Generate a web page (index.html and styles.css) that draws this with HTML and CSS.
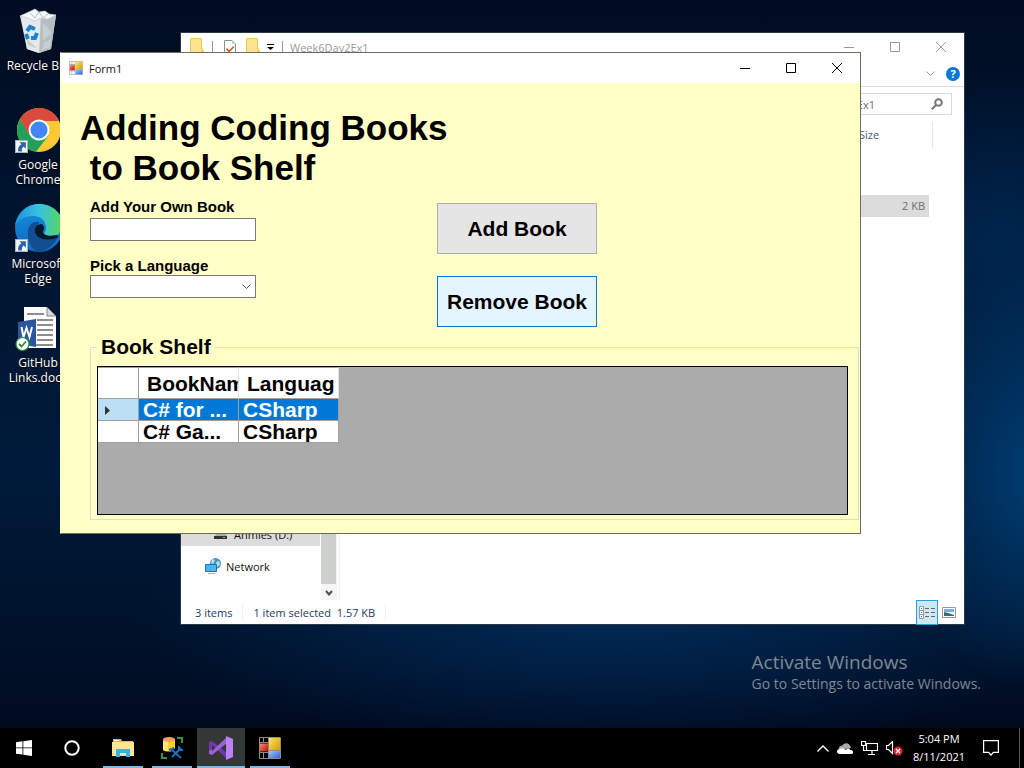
FILE: index.html
```html
<!DOCTYPE html>
<html lang="en">
<head>
<meta charset="utf-8">
<meta name="viewport" content="width=device-width, initial-scale=1">
<title>Form1</title>
<link rel="stylesheet" href="styles.css">
</head>
<body>
<svg class="defs" width="0" height="0" aria-hidden="true">
  <defs>
    <symbol id="shortcut" viewBox="0 0 12 12">
      <path fill="#f4f6f8" stroke="#aab4be" d="M.5.5h11v11H.5z"/>
      <path fill="#2d62a8" d="M4 2h6v6L8 6C6.500 7 6 8.500 6.500 10.500H3C2.500 7.500 3.500 5.500 6 4z"/>
    </symbol>
    <symbol id="formicon" viewBox="0 0 22 22">
      <path fill="none" stroke="#8b8b8b" stroke-width="1" d="M.5.5h21v21H.5zM.5 5.500h9M9.500.5v21M4.500.5v5M4.500 15v6M.5 15.500h9M9.500 13.500h12"/>
      <path fill="url(#gRed)" d="M1 6.500h8v8H1z"/>
      <path fill="url(#gGold)" d="M10 1h11v12H10z"/>
      <path fill="url(#gBlue)" d="M10 14h11v7H10z"/>
    </symbol>
    <symbol id="folder" viewBox="0 0 14 18">
      <path fill="#ffe48f" stroke="#f0ca55" d="M.5.5h11v12h2v5H.5z"/>
      <path fill="#ffd45e" d="M11 10h2v7h-2z"/>
    </symbol>
    <linearGradient id="gRed" x2="1" y2="1"><stop offset="0" stop-color="#ff8a70"/><stop offset="1" stop-color="#b80f0f"/></linearGradient>
    <linearGradient id="gGold" x2="1" y2="1"><stop offset="0" stop-color="#ffe36e"/><stop offset="1" stop-color="#d79a00"/></linearGradient>
    <linearGradient id="gBlue" x2="1" y2="1"><stop offset="0" stop-color="#9ec5ff"/><stop offset="1" stop-color="#2d63d6"/></linearGradient>
  </defs>
</svg>

<main class="desktop">
  <nav class="shortcuts" aria-label="Desktop">
    <a class="shortcut" href="#">
      <svg class="shortcut-icon" viewBox="0 0 48 48" aria-hidden="true">
        <path fill="#d4dadd" d="M6 10l36-1-5 34-12 4-12-4z"/>
        <path fill="#b6bec3" d="M27 13l15-4-5 34-12 4z"/>
        <path fill="#e5e9eb" d="M7 10l19 4-1 33-12-4z"/>
        <path fill="#c8cfd3" d="M29 17l9 10-9 7zM30 37l7-4-1 8-8 3zM12 32l12 11-10-4z"/>
        <path fill="#f7f9fa" stroke="#c3cbd0" stroke-width=".7" d="M6 10l11-5 4-2 4 3 6-1 4 3 7 1-8 4-8-1-5 3-7-3z"/>
        <path fill="none" stroke="#b4bcc1" d="M16 7l5 5 4-6 4 6 5-4"/>
        <path fill="none" stroke="#1683d4" stroke-width="4" d="M13 25l3-4 5 2M23 27l-2 5-4 0M14 33l-2-5"/>
      </svg>
      <span>Recycle Bin</span>
    </a>
    <a class="shortcut" href="#">
      <svg class="shortcut-icon" viewBox="0 0 48 48" aria-hidden="true">
        <circle cx="25" cy="25" r="22" fill="#fbc934"/>
        <path fill="#21a05c" d="M5.950 14A22 22 0 0 0 22 46.800L34.500 30.500 16 30z"/>
        <path fill="#dc4a3e" d="M5.950 14A22 22 0 0 1 45 16H25L15.500 30.500z"/>
        <circle cx="25" cy="25" r="10.500" fill="#fff"/><circle cx="25" cy="25" r="8.500" fill="#4286f5"/>
        <use href="#shortcut" x="1" y="35" width="13" height="13"/>
      </svg>
      <span>Google Chrome</span>
    </a>
    <a class="shortcut" href="#">
      <svg class="shortcut-icon" viewBox="0 0 48 48" aria-hidden="true">
        <defs>
          <linearGradient id="e1" x2="1"><stop offset="0" stop-color="#1e90dc"/><stop offset=".5" stop-color="#35c3e2"/><stop offset="1" stop-color="#5ad654"/></linearGradient>
          <linearGradient id="e2" x2="0" y2="1"><stop offset="0" stop-color="#1491df"/><stop offset="1" stop-color="#1167c0"/></linearGradient>
        </defs>
        <circle cx="25" cy="24" r="24" fill="url(#e2)"/>
        <path fill="#124d8f" d="M14 27C15 20 20 17 25 18c-2 8 1 17 19 15-4 8-12 15-21 15-6-4-10-12-9-21z"/>
        <path fill="url(#e1)" d="M1 22C3 9 13 0 25 0c14 0 24 10 24 21 0 8-6 11-12 11-5 0-8-2-6-4 3-5 0-16-12-16C10 12 4 16 1 22z"/>
        <path fill="#04172f" d="M28 20c-5 0-8 4-7 8 2 7 12 10 24 5l-2-2c-8 2-15 0-14-4 2-2 1-5-1-7z"/>
        <use href="#shortcut" x="1" y="35" width="13" height="13"/>
      </svg>
      <span>Microsoft Edge</span>
    </a>
    <a class="shortcut" href="#">
      <svg class="shortcut-icon" viewBox="0 0 48 48" aria-hidden="true">
        <path fill="#fff" d="M10 4h23l9 9v32H10z"/>
        <path fill="#dadada" stroke="#555" stroke-width=".7" d="M33 4v9h9z"/>
        <path stroke="#8e8e8e" stroke-width="2" d="M13 11h17M23 17h16M23 22h16M23 27h16M23 32h16M23 37h16M17 42h22"/>
        <path fill="#2a569b" d="M4 19l18-3v28L4 41z"/>
        <path fill="none" stroke="#fff" stroke-width="2" d="M7.500 24l2 10 3-9 3 9 2.500-10"/>
        <circle cx="8.500" cy="41" r="6.500" fill="#fff" stroke="#298d3d" stroke-width="1.200"/>
        <path fill="none" stroke="#298d3d" stroke-width="1.800" d="M5 41l2.500 2.500 4.500-5"/>
      </svg>
      <span>GitHub Links.docx</span>
    </a>
  </nav>

  <section class="explorer" aria-label="Week6Day2Ex1">
    <header class="explorer-title">
      <svg class="folder-icon" aria-hidden="true"><use href="#folder"/></svg>
      <i class="tick"></i>
      <svg class="page-icon" viewBox="0 0 12 15" aria-hidden="true"><path fill="#fff" stroke="#8b9298" d="M.5.500H8L11.500 4v10.500H.5z"/><path fill="#c5cfd6" d="M8 0v4h4z"/><path fill="none" stroke="#e8541c" stroke-width="1.600" d="M2.500 8.500l2.500 3 5-5"/></svg>
      <svg class="folder-icon" aria-hidden="true"><use href="#folder"/></svg>
      <svg class="drop-icon" viewBox="0 0 7 6" aria-hidden="true"><path d="M0 0h7v1H0zM0 3h7L3.500 6z"/></svg>
      <i class="tick"></i>
      <span class="explorer-name">Week6Day2Ex1</span>
      <div class="controls muted">
        <button type="button" aria-label="Minimize folder"><svg viewBox="0 0 10 10"><path d="M0 5.500h10"/></svg></button>
        <button type="button" aria-label="Maximize folder"><svg viewBox="0 0 10 10"><path d="M.5.500h9v9h-9z"/></svg></button>
        <button type="button" aria-label="Close folder"><svg viewBox="0 0 10 10"><path d="M0 0l10 10M10 0L0 10"/></svg></button>
      </div>
    </header>
    <div class="ribbon">
      <svg class="chevron" viewBox="0 0 9 5" aria-hidden="true"><path d="M.5.500l4 4 4-4"/></svg>
      <button class="help" type="button" aria-label="Help">?</button>
    </div>
    <div class="address">
      <label class="search"><input type="text" aria-label="Search" placeholder="Search Week6Day2Ex1"><svg viewBox="0 0 12 12" aria-hidden="true"><circle cx="7.500" cy="4.500" r="3.300"/><path d="M5 7L.8 11.200"/></svg></label>
    </div>
    <div class="explorer-main">
      <div class="tree">
        <a class="tree-item current" href="#"><svg viewBox="0 0 16 16" aria-hidden="true"><path fill="#aaa" d="M4 6h8l2 4H2z"/><path fill="#333" d="M1 10h13v3H1z"/><path fill="#3bea3b" d="M10 11h2v1h-2z"/></svg>Anmies (D:)</a>
        <a class="tree-item network" href="#"><svg viewBox="0 0 16 16" aria-hidden="true"><circle cx="10.500" cy="5.500" r="5.500" fill="#4d93bd"/><path fill="#b9dcec" d="M7 1l3 1-2 4-2-1zM11 4l3-1 1 4-3 2z"/><path fill="#48b6f2" stroke="#1d77ae" d="M.5 6.500h11v7H.5z"/><path fill="#a9b7c0" d="M3 15h7v1H3z"/></svg>Network</a>
      </div>
      <div class="scroll"><span class="thumb"></span><svg class="scroll-arrow" viewBox="0 0 8 6" aria-hidden="true"><path d="M1 1l3 3.500L7 1"/></svg></div>
      <div class="files">
        <div class="file-head"><span>Size</span></div>
        <div class="file-row">2 KB</div>
      </div>
    </div>
    <footer class="status">
      <span>3 items</span><span>1 item selected&nbsp; 1.57 KB</span>
      <div class="views">
        <button class="view on" type="button" aria-label="Details"><svg viewBox="0 0 16 13"><path fill="#fff" stroke="#999" d="M.5.500h4v12h-4zM.5 4.500h4M.5 8.500h4"/><path stroke="#666" d="M6 2.500h4M12 2.500h4M6 6.500h4M12 6.500h4M6 10.500h4M12 10.500h4"/><path fill="#357ad0" d="M2 2h1v1H2zM2 6h1v1H2z"/><path fill="#d33" d="M2 10h1v1H2z"/></svg></button>
        <button class="view" type="button" aria-label="Thumbnails"><svg viewBox="0 0 14 11"><path fill="#fff" stroke="#999" d="M.5.500h13v10H.5z"/><path fill="#79adf2" d="M2 2h10v3H2z"/><path fill="#eef5f8" d="M2 5h10v2H2z"/><path fill="#396e72" d="M2 5l4 1 6 2v1H2z"/></svg></button>
      </div>
    </footer>
  </section>

  <section class="form-window" aria-label="Form1">
    <header class="form-title">
      <svg class="app-icon" aria-hidden="true"><use href="#formicon"/></svg>
      <span>Form1</span>
      <div class="controls">
        <button type="button" aria-label="Minimize"><svg viewBox="0 0 10 10"><path d="M0 5.500h10"/></svg></button>
        <button type="button" aria-label="Maximize"><svg viewBox="0 0 10 10"><path d="M.5.500h9v9h-9z"/></svg></button>
        <button type="button" aria-label="Close"><svg viewBox="0 0 10 10"><path d="M0 0l10 10M10 0L0 10"/></svg></button>
      </div>
    </header>
    <form class="form-body">
      <h1>Adding Coding Books
 to Book Shelf</h1>
      <div class="entry">
        <div class="fields">
          <label class="first" for="own">Add Your Own Book</label>
          <input id="own" class="box" type="text">
          <label class="second" for="lang">Pick a Language</label>
          <div class="pick">
            <select id="lang" class="box"><option></option><option>CSharp</option></select>
            <svg class="chevron" viewBox="0 0 9 5" aria-hidden="true"><path d="M.5.500l4 4 4-4"/></svg>
          </div>
        </div>
        <div class="actions">
          <button class="action" type="button">Add Book</button>
          <button class="action hot" type="button">Remove Book</button>
        </div>
      </div>
      <fieldset>
        <legend>Book Shelf</legend>
        <div class="grid">
          <table>
            <colgroup><col class="col-mark"><col class="col-text"><col class="col-text"></colgroup>
            <thead><tr><th></th><th>BookNam</th><th>Languag</th></tr></thead>
            <tbody>
              <tr class="selected"><td class="mark"><svg viewBox="0 0 5 9" aria-hidden="true"><path d="M0 0l5 4.500L0 9z"/></svg></td><td>C# for ...</td><td>CSharp</td></tr>
              <tr><td></td><td>C# Ga...</td><td>CSharp</td></tr>
            </tbody>
          </table>
        </div>
      </fieldset>
    </form>
  </section>

  <div class="activate"><p class="activate-head">Activate Windows</p><p>Go to Settings to activate Windows.</p></div>
</main>

<footer class="taskbar">
  <button class="task" type="button" aria-label="Start"><svg width="16" height="16" viewBox="0 0 16 16"><path fill="#fff" d="M0 2.200L6.500 1.300v6.200H0zM7.300 1.200L16 0v7.500H7.300zM0 8.300h6.500v6.300L0 13.700zM7.300 8.300H16V16l-8.700-1.200z"/></svg></button>
  <button class="task" type="button" aria-label="Cortana"><svg width="16" height="16" viewBox="0 0 16 16"><circle cx="8" cy="8" r="6.700" fill="none" stroke="#fff" stroke-width="2"/></svg></button>
  <div class="running">
    <button class="task open" type="button" aria-label="File Explorer"><svg width="22" height="18" viewBox="0 0 22 18"><path fill="#f1b72c" d="M1 0h8l1 2h11v5H1z"/><path fill="#ffe592" d="M0 3h22v14H0z"/><path fill="#fff" d="M2 1h5v1H2z"/><path fill="#33b4ea" d="M4 10h14v8h-4v-4H8v4H4z"/></svg></button>
    <button class="task open" type="button" aria-label="Database tools"><svg width="22" height="22" viewBox="0 0 22 22"><path fill="#ffd21f" d="M2 2v11c1 2 11 2 12 0V2z"/><path fill="#ffe873" d="M2 3h5v11l-5-1z"/><ellipse cx="8" cy="2.500" rx="6" ry="2.500" fill="#f4a45a"/><path fill="none" stroke="#38913c" stroke-width="2" d="M16 1h5v5M1 16v5h5"/><path fill="none" stroke="#000" stroke-width="4" d="M11 20l9-9M11 12l9 9"/><path fill="none" stroke="#1474c4" stroke-width="2" d="M11 20l9-9M10 12l10 9M8 13l5-2M18 9v4h4"/></svg></button>
    <button class="task open active" type="button" aria-label="Visual Studio"><svg width="24" height="24" viewBox="0 0 24 24"><path fill="#7038ad" d="M0 6l3-1 15 12v6L3 9v7l-3-1z"/><path fill="#9b61d8" d="M0 18l3 1L18 7V1L3 15v-2l-3 2z"/><path fill="#b983f2" d="M17 0l7 3v18l-7 3z"/></svg></button>
    <button class="task open" type="button" aria-label="Form1"><svg width="22" height="22"><use href="#formicon"/></svg></button>
  </div>
  <div class="tray">
    <svg width="12" height="7" viewBox="0 0 12 7"><path fill="none" stroke="#fff" stroke-width="1.300" d="M.5 6.500L6 1l5.500 5.500"/></svg>
    <svg width="16" height="11" viewBox="0 0 16 11"><path fill="#aaa" d="M2 7C1 4 4 2 5 3c2-4 8-4 9 2z"/><path fill="#fff" d="M3 11C-1 11-1 6 3 6c2-2 5 0 6 1 1-2 4-2 4 0 4 0 4 4 1 4z"/></svg>
    <svg width="17" height="15" viewBox="0 0 17 15"><path fill="none" stroke="#fff" stroke-width="1.200" d="M5.500 2.500h11v7h-11zM11 9.500v4M7 13.500h7M.5.500h4v4h-4zM2.500 4.500v5h3"/></svg>
    <svg width="17" height="15" viewBox="0 0 17 15"><path fill="none" stroke="#fff" stroke-width="1.200" d="M.5 4.500h2l4-4v12l-4-4h-2z"/><circle cx="12" cy="10" r="4.500" fill="#e8222e"/><path stroke="#fff" stroke-width="1.300" d="M10 8l4 4M14 8l-4 4"/></svg>
    <time class="clock" datetime="2021-08-11T17:04">5:04 PM<br>8/11/2021</time>
    <svg width="16" height="16" viewBox="0 0 16 16"><path fill="none" stroke="#fff" stroke-width="1.200" d="M.6.600h14.800v11.800h-5L8 15l-2.400-2.600h-5z"/></svg>
  </div>
</footer>
</body>
</html>
```
FILE: styles.css
```css
* { box-sizing: border-box; }
body {
  margin: 0;
  min-height: 100vh;
  display: flex;
  flex-direction: column;
  font: 12px/15px "Open Sans", "Noto Sans", sans-serif;
  color: #111;
  background: #000b20;
}
button, input, select { font: inherit; color: inherit; margin: 0; border-radius: 0; }
button { padding: 0; border: 0; background: none; }
a { color: inherit; text-decoration: none; }
p, h1 { margin: 0; }
svg { display: block; flex: none; }
.defs { position: absolute; }

.desktop {
  flex: 1;
  position: relative;
  overflow: hidden;
  min-height: 640px;
  background:
    radial-gradient(ellipse 160px 220px at 102% 65%, #003f75 0%, transparent 100%),
    radial-gradient(ellipse 480px 130px at 60% 85%, #002a56 0%, transparent 100%),
    radial-gradient(ellipse 180px 180px at 98% 34%, #00264e 0%, transparent 100%),
    linear-gradient(#000c21 0%, #001530 35%, #001b3b 65%, #001129 88%, #000b20 100%);
}

/* Desktop shortcuts */
.shortcuts {
  display: grid;
  grid-auto-rows: 99px;
  width: 76px;
  padding-top: 6px;
}
.shortcut {
  display: flex;
  flex-direction: column;
  align-items: center;
  gap: 4px;
  color: #fff;
  text-align: center;
  text-shadow: 0 1px 2px #000;
}
.shortcut-icon { width: 48px; height: 48px; overflow: visible; }

/* Window caption buttons */
.controls { display: flex; margin-left: auto; align-self: stretch; }
.controls button { width: 46px; display: grid; place-items: center; }
.controls svg { width: 10px; height: 10px; fill: none; stroke: #000; overflow: visible; }
.controls.muted svg { stroke: #999; }
.chevron { width: 9px; height: 5px; fill: none; stroke: #555; overflow: visible; }

/* File explorer */
.explorer {
  position: absolute;
  inset: 32px 59px 103px 180px;
  display: flex;
  flex-direction: column;
  background: #fff;
  border: 1px solid #2a3848;
  font-size: 11px;
}
.explorer-title { display: flex; align-items: center; height: 28px; padding-left: 9px; color: #999; }
.folder-icon { width: 14px; height: 18px; }
.tick { width: 1px; height: 12px; background: #999; margin: 0 11px 0 8px; }
.page-icon { width: 12px; height: 15px; margin-right: 10px; }
.drop-icon { width: 7px; height: 6px; margin-left: 7px; }
.explorer-name { margin-left: -4px; }
.ribbon {
  display: flex;
  align-items: center;
  justify-content: flex-end;
  gap: 11px;
  height: 26px;
  padding-right: 4px;
  border-bottom: 1px solid #dcdcdc;
}
.ribbon .chevron { stroke: #999; }
.help {
  width: 14px;
  height: 14px;
  border-radius: 50%;
  background: #0878d7;
  color: #fff;
  font-weight: 700;
  line-height: 14px;
}
.address { display: flex; justify-content: flex-end; padding: 6px 12px 0; }
.search {
  display: flex;
  align-items: center;
  width: 208px;
  height: 22px;
  padding-right: 8px;
  border: 1px solid #d9d9d9;
}
.search input { width: 100%; min-width: 0; padding: 0 56px 0 0; border: 0; outline: 0; text-align: right; background: none; }
.search input::placeholder { color: #6d6d6d; opacity: 1; }
.search svg { width: 12px; height: 12px; fill: none; stroke: #777; stroke-width: 2; }
.explorer-main { flex: 1; display: flex; min-height: 0; }
.tree { width: 140px; display: flex; flex-direction: column; justify-content: flex-end; gap: 8px; padding-bottom: 22px; }
.tree-item { display: flex; align-items: center; gap: 5px; height: 24px; padding-left: 32px; }
.tree-item.network { padding-left: 24px; }
.tree-item.current { background: #dcdcdc; margin-right: 1px; }
.tree-item svg { width: 16px; height: 16px; }
.scroll { width: 16px; display: flex; flex-direction: column; background: #f5f5f5; }
.thumb { flex: 1; background: #ccd1ce; margin-right: 1px; }
.scroll-arrow { width: 8px; height: 6px; margin: 6px 4px 4px; fill: none; stroke: #505050; stroke-width: 2; }
.files { flex: 1; margin-left: 2px; border-left: 1px solid #f0f0f0; padding: 7px 31px 0 0; }
.file-head { display: flex; justify-content: flex-end; height: 26px; border-right: 1px solid #e2e6e8; color: #44597a; }
.file-head span { width: 73px; line-height: 26px; }
.file-row { height: 22px; margin: 47px 4px 0 0; padding-right: 4px; background: #dcdcdc; color: #6d6d6d; text-align: right; line-height: 22px; }
.status { display: flex; align-items: center; height: 24px; padding-left: 14px; color: #1e3c66; }
.status span { padding-right: 10px; margin-right: 10px; border-right: 1px solid #eee; }
.views { display: flex; align-items: center; gap: 4px; margin-left: auto; padding-right: 8px; }
.view.on { padding: 5px 2px; border: 1px solid #26a0da; background: #cce8f5; }
.view svg { width: 14px; height: 11px; }
.view.on svg { width: 16px; height: 13px; }

/* Form window */
.form-window {
  position: absolute;
  top: 52px;
  left: 60px;
  right: 163px;
  border: 1px solid #6b6b60;
  border-left-color: #ffffc6;
  background: #ffffc6;
}
.form-title { display: flex; align-items: center; gap: 6px; height: 30px; padding-left: 8px; background: #fff; font-size: 11px; }
.app-icon { width: 14px; height: 14px; }
.form-body {
  padding: 25px 1px 13px 29px;
  font: 700 21px/22px "Liberation Sans", Arial, sans-serif;
  color: #000;
}
.form-body h1 { margin-left: -10px; font-size: 35px; line-height: 40px; white-space: pre; }
.entry { display: flex; gap: 181px; padding-top: 10px; }
.fields { width: 166px; display: flex; flex-direction: column; font-size: 15px; line-height: 18px; white-space: nowrap; }
.fields .first { padding-bottom: 2px; }
.fields .second { margin-top: 16px; }
.box { width: 100%; height: 23px; border: 1px solid #7a7a7a; background: #fff; padding: 1px 4px; font-size: 14px; appearance: none; }
.pick { display: grid; align-items: center; }
.pick .box, .pick .chevron { grid-area: 1 / 1; }
.pick .chevron { justify-self: end; margin-right: 5px; pointer-events: none; }
.actions { display: flex; flex-direction: column; gap: 22px; padding-top: 5px; }
.action { width: 160px; height: 51px; border: 1px solid #adadad; background: #e5e5e5; }
.action.hot { border-color: #0078d7; background: #e5f5ff; }
fieldset { margin: 9px 0 0; padding: 8px 10px 4px 6px; border: 1px solid #dcdcdc; min-width: 0; }
legend { padding: 0 4px; }
.grid { height: 149px; border: 1px solid #000; background: #ababab; overflow: hidden; }
table { width: 241px; table-layout: fixed; border-collapse: separate; border-spacing: 0; }
.col-mark { width: 41px; }
.col-text { width: 100px; }
th, td { height: 22px; padding: 0 0 0 4px; border: 0 solid #a0a0a0; border-width: 0 1px 1px 0; background: #fff; text-align: left; white-space: nowrap; overflow: hidden; line-height: 21px; }
td { padding-top: 1px; line-height: 20px; }
th { height: 32px; padding-left: 8px; border-top-width: 1px; border-right-color: #e2e2e2; }
th:first-child { border-right-color: #a0a0a0; }
.selected td { background: #0078d7; color: #fff; }
.selected .mark { padding-left: 7px; background: #bcdff5; }
.mark svg { width: 5px; height: 9px; fill: #333; }

.activate { position: absolute; right: 43px; bottom: 33px; color: #7d8894; font-size: 14px; line-height: 22px; }
.activate-head { font-size: 19px; }

/* Taskbar */
.taskbar { display: flex; align-items: stretch; height: 40px; background: #000; color: #fff; }
.task { width: 48px; height: 40px; display: grid; place-items: center; position: relative; }
.running { display: flex; gap: 1px; margin-left: 3px; }
.open::after { content: ""; position: absolute; bottom: 0; left: 4px; right: 4px; height: 2px; background: #76b9ed; }
.active { background: #333735; }
.active::after { left: 0; right: 0; }
.tray { display: flex; align-items: center; gap: 8px; margin: 0 4px 0 auto; padding-right: 20px; border-right: 1px solid #555; }
.clock { width: 56px; text-align: center; font-size: 11px; line-height: 18px; margin-right: 8px; }
```
